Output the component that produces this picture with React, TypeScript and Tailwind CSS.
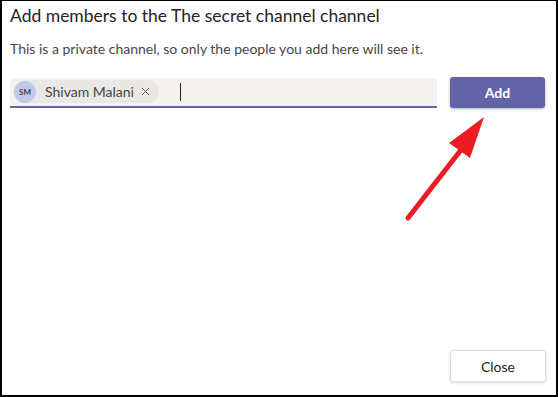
export default function App() {
  return (
    <div
      className="relative w-[558px] h-[397px] bg-white border-t border-l-2 border-r-2 border-b-2 border-black flex flex-col text-[#252423]"
      style={{ fontFamily: 'Lato, "Noto Sans", sans-serif' }}
    >
      <div className="pl-2 pr-[11px] pt-[3px]">
        <h1 className="text-[17.5px] leading-6 font-normal">Add members to the The secret channel channel</h1>
        <p className="mt-[12px] text-[14px] leading-[18px] text-[#484644]">
          This is a private channel, so only the people you add here will see it.
        </p>
        <div className="mt-[19px] flex items-center gap-[13px]">
          <div className="flex-1 h-[30px] bg-[#f3f2f1] rounded-t-[3px] border-b-2 border-[#6264a7] flex items-center pl-1">
            <div className="flex items-center h-[23px] rounded-full bg-[#e9e8e7] pr-[9px]">
              <div className="w-[22px] h-[22px] rounded-full bg-[#c2c8e7] flex items-center justify-center text-[8px] font-semibold text-[#33344a]">
                SM
              </div>
              <span className="ml-[9px] text-[14px] text-[#484644]">Shivam Malani</span>
              <svg className="ml-[7px]" width="9" height="9" viewBox="0 0 9 9">
                <path d="M1 1L8 8M8 1L1 8" stroke="#605e5c" strokeWidth="1" />
              </svg>
            </div>
            <div className="ml-[21px] w-px h-[18px] bg-[#252423]" />
          </div>
          <button className="w-[95px] h-[31px] rounded-[3px] bg-[#6264a7] text-white text-[14px] font-bold shadow-[0_1px_3px_rgba(0,0,0,0.3)]">
            Add
          </button>
        </div>
      </div>
      <div className="flex-1" />
      <div className="flex justify-end pr-[10px] pb-[13px]">
        <button className="w-[96px] h-[32px] rounded-[3px] bg-white border border-[#e1dfdd] text-[14px] text-[#252423] shadow-[0_1px_3px_rgba(0,0,0,0.15)]">
          Close
        </button>
      </div>
      <svg className="absolute left-0 top-0 pointer-events-none" width="558" height="397" viewBox="0 0 558 397">
        <line x1="406" y1="217" x2="462" y2="145" stroke="#ed1c24" strokeWidth="5" strokeLinecap="round" />
        <polygon points="482,116 447,142 468,157" fill="#ed1c24" />
      </svg>
    </div>
  );
}
